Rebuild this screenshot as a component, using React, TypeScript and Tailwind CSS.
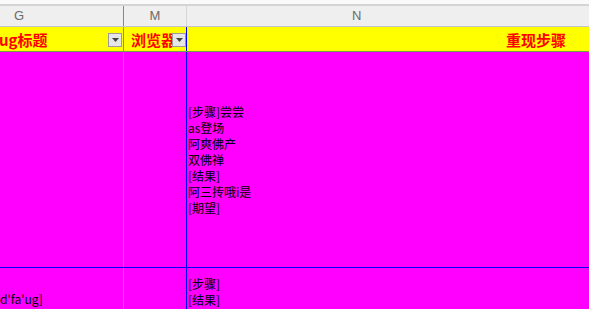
import React from 'react';

const cjk = { fontFamily: '"Noto Sans CJK SC", "Liberation Sans", sans-serif' };

function FilterButton() {
  return (
    <div className="w-[14px] h-[14px] bg-[#e6e6e6] border border-[#9a9a9a] flex items-center justify-center shrink-0">
      <svg width="7" height="4" viewBox="0 0 7 4">
        <path d="M0 0 L7 0 L3.5 4 Z" fill="#444" />
      </svg>
    </div>
  );
}

export default function App() {
  const stepsLines = ['[步骤]尝尝', 'as登场', '阿爽佛产', '双佛禅', '[结果]', '阿三抟哦i是', '[期望]'];

  return (
    <div className="w-[589px] h-[309px] overflow-hidden bg-white flex flex-col" style={cjk}>
      {/* top strip */}
      <div className="h-[4px] bg-[#fafafa] shrink-0" />
      <div className="h-[2px] bg-[#d4d4d4] shrink-0" />

      {/* column letters */}
      <div className="h-[21px] bg-[#efefef] border-b border-[#c6c6c6] flex shrink-0 text-[13px] text-[#6b6b6b]" style={{ fontFamily: '"Liberation Sans", sans-serif' }}>
        <div className="w-[124px] border-r border-[#70a048] flex items-center pl-[14px]">G</div>
        <div className="w-[63px] border-r border-[#d6d6d6] flex items-center justify-center">M</div>
        <div className="flex-1 flex items-center pl-[165px]">N</div>
      </div>

      {/* header row */}
      <div className="h-[25px] bg-[#ffff00] border-b border-[#70a048] flex shrink-0 text-[15px] font-bold text-[#ff0000]">
        <div className="w-[124px] border-r border-[#70a048] flex items-center justify-between pr-[1px] pt-[2px]">
          <span className="whitespace-nowrap -ml-[1px]">ug标题</span>
          <FilterButton />
        </div>
        <div className="w-[63px] border-r border-[#0000ff] flex items-center pt-[2px] overflow-hidden">
          <span className="whitespace-nowrap pl-[7px] w-[48px] overflow-hidden">浏览器</span>
          <FilterButton />
        </div>
        <div className="flex-1 flex items-center pl-[319px] pt-[2px] whitespace-nowrap">重现步骤</div>
      </div>

      {/* data row 1 */}
      <div className="h-[216px] bg-[#ff00ff] border-b border-[#0000ff] flex shrink-0 text-[12px] leading-[16px] text-black">
        <div className="w-[124px] border-r border-[#7f9f6f]" />
        <div className="w-[63px] border-r border-[#0000ff]" />
        <div className="flex-1 flex flex-col justify-center pl-[1px] pt-[1px]">
          {stepsLines.map((l, i) => (
            <div key={i} className="whitespace-nowrap">{l}</div>
          ))}
        </div>
      </div>

      {/* data row 2 */}
      <div className="flex-1 bg-[#ff00ff] flex text-[12px] leading-[16px] text-black">
        <div className="w-[124px] border-r border-[#7f9f6f] flex flex-col justify-end pb-[2px]">
          <div className="whitespace-nowrap">d'fa'ug]</div>
        </div>
        <div className="w-[63px] border-r border-[#0000ff]" />
        <div className="flex-1 flex flex-col pt-[8px] pl-[1px]">
          <div className="whitespace-nowrap">[步骤]</div>
          <div className="whitespace-nowrap">[结果]</div>
        </div>
      </div>
    </div>
  );
}
